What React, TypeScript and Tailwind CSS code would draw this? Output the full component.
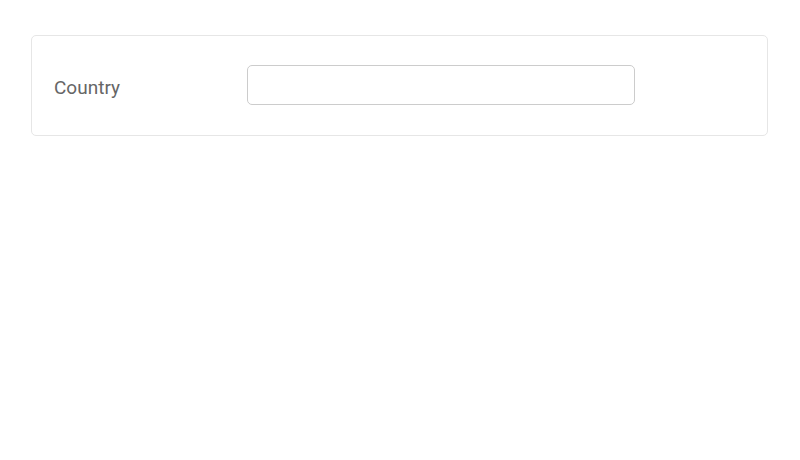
export default function App() {
  return (
    <div className="min-h-[460px] bg-white pt-[35px] font-['Roboto',sans-serif]">
      <div className="ml-[31px] mr-[32px] flex items-center rounded-[5px] border border-[#e6e6e6] px-[22px] pt-[29px] pb-[30px]">
        <label htmlFor="country" className="mt-[6px] w-[193px] text-[19px] text-[#666]">
          Country
        </label>
        <input
          id="country"
          type="text"
          className="h-[40px] w-[388px] rounded-[5px] border border-[#ccc] px-3 text-[16px] text-[#333] outline-none"
        />
      </div>
    </div>
  );
}
